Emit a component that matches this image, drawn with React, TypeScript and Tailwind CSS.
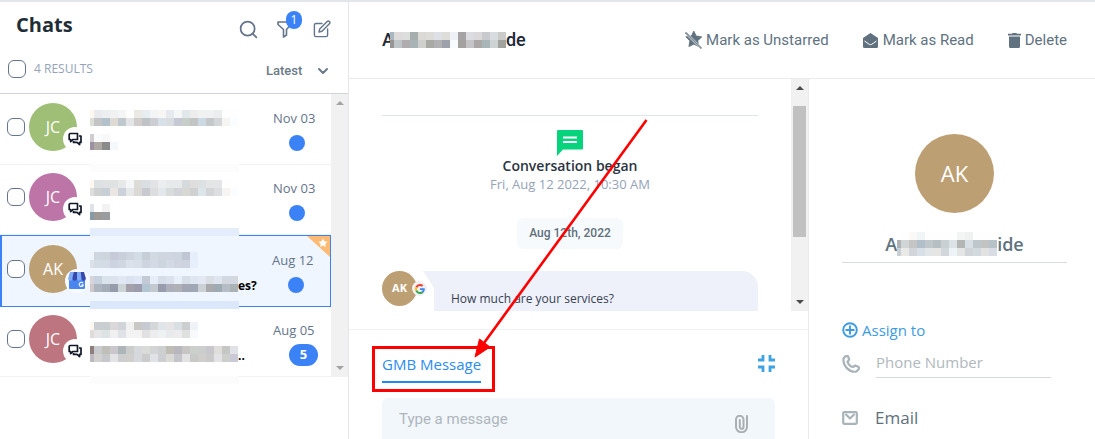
import React from "react";
import { LuSearch, LuChevronDown } from "react-icons/lu";

const ui = "font-['Open_Sans',sans-serif]";
const rb = "font-['Roboto',sans-serif]";

/* Redacted text: rows of 8px tiles, "." leaves a tile empty. */
function Redacted({ rows, first = 8, tile = 8, label }: { rows: string[]; first?: number; tile?: number; label: string }) {
  const grid = rows.map((r) => r.split(" "));
  const width = first + (grid[0].length - 1) * tile;
  return (
    <svg role="img" aria-label={label} width={width} height={rows.length * tile} shapeRendering="crispEdges" className="block shrink-0">
      {grid.map((row, y) =>
        row.map((c, x) =>
          c === "." ? null : (
            <rect key={x + "-" + y} x={x === 0 ? 0 : first + (x - 1) * tile} y={y * tile} width={x === 0 ? first : tile} height={tile} fill={"#" + c} />
          )
        )
      )}
    </svg>
  );
}

function ScrollArrow({ up, color }: { up?: boolean; color: string }) {
  return (
    <svg width="8" height="4" viewBox="0 0 8 4" fill={color}>
      <path d={up ? "M0 4L4 0L8 4Z" : "M0 0H8L4 4Z"} />
    </svg>
  );
}

function ChatsGlyph() {
  return (
    <svg width="14" height="14" viewBox="0 0 14 14" fill="none" stroke="#111827" strokeWidth="1.7" strokeLinejoin="round">
      <path d="M2 1.5H9.5V7.5H5L2.6 9.6V7.5H1.2V2.3Z" />
      <path d="M11 4H13V10.4H11.6V12.6L9 10.4H5.5V9" />
    </svg>
  );
}

function StoreGlyph() {
  return (
    <svg width="18" height="17" viewBox="0 0 18 17">
      <path d="M1 4H17V16a1 1 0 0 1-1 1H2a1 1 0 0 1-1-1Z" fill="#4a86f0" />
      <path d="M2 0H5.5L4.5 6.5a2.2 2.2 0 0 1-4.4 0Z" fill="#7faaf5" />
      <path d="M5.5 0H9V6.5a2.2 2.2 0 0 1-4.5 0Z" fill="#3949ab" />
      <path d="M9 0H12.5L13.5 6.5a2.2 2.2 0 0 1-4.5 0Z" fill="#7faaf5" />
      <path d="M12.5 0H16L17.9 6.5a2.2 2.2 0 0 1-4.4 0Z" fill="#3949ab" />
      <path d="M15 11.2A2.1 2.1 0 1 0 15.3 13H13.2" stroke="#fff" strokeWidth="1.1" fill="none" />
    </svg>
  );
}

function Check({ label }: { label: string }) {
  return <input type="checkbox" aria-label={label} className="size-[18px] shrink-0 appearance-none rounded-md border border-[#64748b] bg-white checked:bg-[#3b82f6]" />;
}

type Chat = {
  initials: string;
  color: string;
  date: string;
  name: string[];
  text: string[];
  band: string;
  tail?: string;
  count?: number;
  active?: boolean;
};

const chats: Chat[] = [
  {
    initials: "JC", color: "bg-[#9fbf77]", date: "Nov 03", band: "-bottom-2 bg-[#fcfcfc]",
    name: [
      "fdf8f0 e9eaee edeef0 f0f1f1 f5f5f5 fefefe ebe9e3 e6eef1 f3f4f5 f8f6f5 e6eaee f5f6f8 e2e7ea ededee f0f1f1 f0f1f3 ecedee fefefe fefefe",
      "deded8 c3c4c6 b3c1ca dedad5 bfc8cd e4e5e6 d0cdcc bfc2c7 cdced3 d8e0e8 dadde0 c5c9d3 c7cdc9 c3c5c4 cdd9e2 c4c8cb d4d6d9 f7f5f4 fafcfe",
    ],
    text: ["cfcccf fafbfd f8f8f8 .", "9d90a2 ada8a1 8a8a8a f4f8fd"],
  },
  {
    initials: "JC", color: "bg-[#bd74a7]", date: "Nov 03", band: "-bottom-0.5 bg-[#e3edfc]",
    name: [
      "fdf8ef dee1e3 dfe1e3 dfe2e2 e7e8ea f4f6f8 dedcd9 d9dfe3 e1e3e6 ebedef e6eaeb e8e9eb d6dadc dfdedd dce2e3 e4e5e6 e3e5e7 fefefe fefefe",
      "dedfda cfd0d2 c7d0d6 ebe6e2 cbd2d9 e7e8ea dad9d6 c9cacf dcdddf e3e8ec d9dcdd d3d4d9 d7d8d4 cfd1d3 dce5e9 d3d5d8 dddee0 f7f5f3 fafcfe",
    ],
    text: ["dfe3e8 ffffff f2f2f3 .", "889aa4 9e9995 989da0 ."],
  },
  {
    initials: "AK", color: "bg-[#bd9f74]", date: "Aug 12", active: true, tail: "es?", band: "-bottom-[3px] bg-[#dbe8fc]",
    name: [
      "eef3fc cfd6df cdd5dd c7cbd9 c9d0db ced5de d2dce7 c8ced8 d1d9e1 cfd6e0 cfd6e1 cdd5de c0c6d3 e7eefb",
      "dde0e7 d3dce5 d5dbe5 cdd3e0 d0d7e1 dbe1eb d9dfe9 cfd5e0 d3dae5 cdd6df d3dae5 cfd4e0 cdd4e0 e7effc",
    ],
    text: [
      "d9d4d8 c7d2de dae2ec dce3ee e1e8f3 dae3ef dfe7f7 c3cad5 e7eefa d7dee9 dbe1ed e7effb d9dfe9 dfe6f1 e3e8f2 dadfe6 dfe5ef d3d7e0 d3d7e0",
      "d0c8cb adb5c0 a5adb9 979cac cdd4d6 a5a1ab 9d9cac b2c5d3 c4c9cf 989dae adb0bb b1b2b7 a3a6b3 a0a7b5 ccd1d6 a9aaab 9eabb2 b7bdc4 acb3b6",
    ],
  },
  {
    initials: "JC", color: "bg-[#bd7580]", date: "Aug 05", tail: "..", count: 5, band: "-bottom-2 bg-[#fcfcfc]",
    name: [
      "fdf8ef cacdd1 c9cfd1 dad8d8 d1d5da f1f1f1 c9c8c6 c5cad3 d5d6d8 dfe5e8 e6e4e4 d9e0e3 cdcecf eff3f7",
      "dfdcdb e6e6e8 dde3e5 f0f0f0 dfe3e7 f3f3f3 f3f3f3 e0e1e0 ecedec eff2f2 e8eaeb ececee dfe1df f8f9fa",
    ],
    text: [
      "8d807c c8cacd c0beb8 c9c7cc acb5b7 cbcdcd d5d9dc dadbd9 d2d4d5 cecfcf bfbcb5 b9b7be c8c6c4 cbd0cd cccdcd c7c7cc dfdeda c5c7c5 e0e2e7",
      "bcbac0 d2d1cf c6c8cb e3e3e6 cdced0 d0cfcc d7d8de cccccd e0e2e7 ccced1 dbdad7 c4c5ca e2e1e3 c9cac8 cfcecc c9cac9 e3e2e7 cccfca c9cad6",
    ],
  },
];

function ChatRow({ chat }: { chat: Chat }) {
  return (
    <li className={chat.active ? "relative flex h-[72px] items-center gap-1 border border-l-2 border-[#3b82f6] bg-[#eff6ff] pr-4 pb-[5px] pl-[5px]" : "relative flex h-[70px] items-center gap-1 border-b border-[#f1f2f4] pr-4 pb-[5px] pl-[7px]"}>
      <Check label={"Select chat " + chat.initials} />
      <div className="relative shrink-0">
        <div className={"flex size-12 items-center justify-center rounded-full text-base text-white " + chat.color}>{chat.initials}</div>
        <div className={chat.active ? "absolute -right-3 bottom-0 flex size-6 items-center justify-center rounded-full bg-[#f7faff]" : "absolute -right-2.5 bottom-0 flex size-6 items-center justify-center rounded-full bg-white"}>
          {chat.active ? <StoreGlyph /> : <ChatsGlyph />}
        </div>
      </div>
      <div className="flex min-w-0 flex-1 flex-col gap-2 pt-1.5 pl-[9px]">
        <Redacted label="Contact name" rows={chat.name} first={4} />
        <div className="flex items-end">
          <Redacted label="Message preview" rows={chat.text} first={4} />
          {chat.tail && <span className="h-4 text-xs leading-5 font-bold text-black">{chat.tail}</span>}
        </div>
      </div>
      <div className="flex w-[42px] shrink-0 flex-col gap-1 pt-2">
        <span className="text-[13px] leading-5 whitespace-nowrap text-[#64748b]">{chat.date}</span>
        {chat.count ? (
          <span className="ml-4 flex h-[22px] w-[29px] items-center justify-center rounded-full bg-[#3b82f6] text-[13px] font-bold text-white">{chat.count}</span>
        ) : (
          <span className="my-[3px] ml-4 size-4 rounded-full bg-[#3b82f6]" />
        )}
      </div>
      {chat.active && (
        <svg className="absolute top-0 right-0" width="23" height="21" viewBox="0 0 23 21">
          <path d="M0 0H23V21Z" fill="#fdba74" />
          <path d="M16 2.5l1.4 2.8 3.1.4-2.2 2.2.5 3-2.8-1.4-2.8 1.4.5-3-2.2-2.2 3.1-.4Z" fill="#fff" />
        </svg>
      )}
      <span className={(chat.active ? "absolute left-[88px] z-10 h-2 w-[149px] " : "absolute left-[90px] z-10 h-2 w-[149px] ") + chat.band} />
    </li>
  );
}

function Sidebar() {
  return (
    <aside className="flex w-[349px] shrink-0 flex-col border-r border-[#e5e7eb]">
      <div className="border-b border-[#d1d5db] pr-[17px] pl-2">
        <div className="flex h-[50px] items-center justify-between pl-2">
          <h1 className="pb-1 text-xl leading-7 font-bold text-[#1f2d37]">Chats</h1>
          <div className="flex items-center gap-[18px] pt-1 text-[#64748b]">
            <button aria-label="Search"><LuSearch size={21} strokeWidth={2} /></button>
            <button aria-label="Filters" className="relative">
              <svg width="18" height="18" viewBox="0 0 18 18" fill="none" stroke="currentColor" strokeWidth="1.6" strokeLinejoin="round">
                <path d="M1 2H14V4.5L9.5 9.5V15L6.5 17V9.5L1 4.5Z" />
              </svg>
              <span className="absolute -top-[9px] left-[9px] flex h-[18px] w-4 items-center justify-center rounded-full bg-[#3b82f6] text-xs text-white">1</span>
            </button>
            <button aria-label="New chat">
              <svg width="18" height="18" viewBox="0 0 18 18" fill="none" stroke="currentColor" strokeWidth="1.4" strokeLinejoin="round" strokeLinecap="round">
                <path d="M9 3.5H3A1.6 1.6 0 0 0 1.4 5V15A1.6 1.6 0 0 0 3 16.6H13A1.6 1.6 0 0 0 14.6 15V9" />
                <path d="M6 12L6.7 9L14.2 1.6A1.4 1.4 0 0 1 16.4 3.8L9 11.3Z" />
              </svg>
            </button>
          </div>
        </div>
        <div className="flex h-[41px] items-center pb-2">
          <Check label="Select all chats" />
          <span className="ml-2 text-xs text-[#94a3b8]">4 RESULTS</span>
          <div className="ml-auto flex items-center gap-3 pt-1 text-[#6b7a88]">
            <select aria-label="Sort order" className={"appearance-none bg-transparent text-[13px] font-medium " + rb}>
              <option>Latest</option>
            </select>
            <LuChevronDown size={16} strokeWidth={3} />
          </div>
        </div>
      </div>
      <div className="flex">
        <ul className="min-w-0 flex-1 pt-px">
          {chats.map((c, i) => <ChatRow key={i} chat={c} />)}
        </ul>
        <div className="flex w-[17px] flex-col items-center justify-between bg-[#f1f1f1] py-[7px]">
          <ScrollArrow up color="#a3a3a3" />
          <ScrollArrow color="#a3a3a3" />
        </div>
      </div>
    </aside>
  );
}

function Header() {
  return (
    <header className={"flex h-[77px] items-center justify-between border-b border-[#e8eaef] pr-7 pl-[33px] " + rb}>
      <h2 className="flex items-center text-lg font-medium text-[#1f2937]">
        <span className="-mr-1">A</span>
        <Redacted
          label="Contact name"
          first={4}
          rows={[
            "a9b8c0 dddcdb dcdddd a5adad dad9d6 dddcd9 dde0e5 dfddd9 eef1f5 a5a3a3 dcdde1 dad8da c9cace d7dce0 cbccc9",
            "989695 bfc6ca b1adae a8b3b7 cfcfce a8a8a5 b1b0b3 9da1a9 f8fcff a3a2a1 c5c5c7 aca7a7 a9b5b8 ced3d3 a1a29e",
          ]}
        />
        <span>de</span>
      </h2>
      <div className="flex gap-[34px] text-[15px] text-[#60727f]">
        <button className="flex items-center gap-1">
          <svg width="17" height="18" viewBox="0 0 17 18">
            <path d="M8.800 0l2.400 5 5.600.8-4 4 .9 5.800-4.900-2.400-4.900 2.400.9-5.800-4-4 5.600-.8Z" fill="currentColor" stroke="currentColor" strokeWidth=".8" strokeLinejoin="round" />
            <path d="M.5 1.500L16.500 17.500" stroke="#fff" strokeWidth="2.400" />
            <path d="M.5 1.500L16.500 17.500" stroke="#8694a0" strokeWidth="1.800" />
          </svg>
          Mark as Unstarred
        </button>
        <button className="flex items-center gap-[5px]">
          <svg width="15" height="15" viewBox="0 0 15 15">
            <path d="M7.500 0L15 5V13.500A1.500 1.500 0 0 1 13.500 15H1.500A1.500 1.500 0 0 1 0 13.500V5Z" fill="currentColor" />
            <path d="M1.500 8L6.200 11.300Q7.500 12 8.800 11.300L13.500 8" fill="none" stroke="#fff" strokeWidth="1" />
          </svg>
          Mark as Read
        </button>
        <button className="flex items-center gap-1">
          <svg width="13" height="15" viewBox="0 0 13 15" fill="currentColor"><path d="M0 .8H4L4.600 0H8.400L9 .8H13V2.500H0ZM1 3.400H12V13.500A1.500 1.500 0 0 1 10.500 15H2.500A1.500 1.500 0 0 1 1 13.500Z" /></svg>
          Delete
        </button>
      </div>
    </header>
  );
}

function Conversation() {
  return (
    <main className="flex min-w-0 flex-1 flex-col border-r border-[#e8eaef]">
      <div className="flex h-[232px]">
        <div className="flex min-w-0 flex-1 flex-col items-center overflow-hidden px-[33px]">
          <div className="mt-9 w-full border-t border-[#e2e5e8]" />
          <svg className="mt-[14px] shrink-0" width="26" height="26" viewBox="0 0 26 26">
            <path d="M1 0H25A1 1 0 0 1 26 1V18.500A1 1 0 0 1 25 19.500H6L0 26V1A1 1 0 0 1 1 0Z" fill="#05d47c" />
            <path d="M6 6.500H20V8.500H6ZM6 11H20V13H6Z" fill="#fff" />
          </svg>
          <p className="text-[14px] leading-5 font-semibold text-[#2a3440]">Conversation began</p>
          <p className="text-[13px] leading-4 text-[#94a3b8]">Fri, Aug 12 2022, 10:30 AM</p>
          <p className={"mt-[26px] rounded-md bg-[#f6fafd] px-3 py-2 text-xs leading-[15px] font-medium text-[#5f6f7b] " + rb}>Aug 12th, 2022</p>
          <div className="mt-[22px] flex w-full items-start">
            <div className="relative flex size-[35px] shrink-0 items-center justify-center rounded-full bg-[#bd9f74] text-[11px] font-bold text-white">
              AK
              <span className="absolute top-[10px] -right-[10px] flex size-[15px] items-center justify-center rounded-full bg-[#f1f1f3]">
                <svg width="10" height="10" viewBox="0 0 48 48">
                  <path fill="#ea4335" d="M24 9.500c3.500 0 6.700 1.200 9.200 3.600l6.900-6.900C35.900 2.400 30.500 0 24 0 14.600 0 6.500 5.400 2.600 13.200l8 6.200C12.400 13.700 17.700 9.500 24 9.500z" />
                  <path fill="#4285f4" d="M47 24.500c0-1.600-.2-3.100-.4-4.500H24v9h12.900c-.6 3-2.300 5.500-4.800 7.200l7.700 6C44.400 38 47 31.800 47 24.500z" />
                  <path fill="#fbbc05" d="M10.500 28.600c-.5-1.500-.8-3-.8-4.600s.3-3.100.8-4.600l-8-6.200C.9 16.500 0 20.100 0 24s.9 7.500 2.600 10.800z" />
                  <path fill="#34a853" d="M24 48c6.500 0 11.900-2.100 15.900-5.800l-7.700-6c-2.200 1.500-4.900 2.300-8.200 2.300-6.300 0-11.600-4.200-13.500-9.900l-8 6.200C6.500 42.600 14.600 48 24 48z" />
                </svg>
              </span>
            </div>
            <svg className="ml-1.5 shrink-0" width="11" height="40" viewBox="0 0 11 40"><path d="M0 0H11V40V17Z" fill="#eef1fa" /></svg>
            <div className="h-[60px] flex-1 rounded-tr-2xl bg-[#eef1fa] px-[17px] pt-[18px] text-xs leading-5 text-[#374151]">How much are your services?</div>
          </div>
        </div>
        <div className="flex w-[17px] flex-col items-center justify-between bg-[#f1f1f1] py-[7px]">
          <ScrollArrow up color="#4b4b4b" />
          <div className="mt-4 mb-auto h-[131px] w-[13px] bg-[#c1c1c1]" />
          <ScrollArrow color="#4b4b4b" />
        </div>
      </div>
      <div className="mt-[18px] border-t border-[#f0f1f3] px-[33px]">
        <div className="flex items-start justify-between pt-[22px]">
          <div className="relative">
            <button className="block border-b-2 border-[#1e88f5] pb-[5px] text-[15px] leading-6 text-[#2b8cf0]">GMB Message</button>
            <div className="pointer-events-none absolute -top-[6px] -right-[14px] -bottom-[9px] -left-[10px] border-3 border-[#ff0000]" />
            <svg className="pointer-events-none absolute -top-[234px] left-[90px]" width="180" height="242" viewBox="0 0 180 242">
              <path d="M174.500 2L12 225" stroke="#ff0000" strokeWidth="2.600" />
              <path d="M3 239L7.500 221L18 229Z" fill="#ff0000" stroke="#ff0000" />
            </svg>
          </div>
          <button aria-label="Collapse composer" className="mt-[3px]">
            <svg width="17" height="17" viewBox="0 0 17 17" fill="none" stroke="#3ea3e3" strokeWidth="2.800">
              <path d="M0 5H5V0M12 0V5H17M17 12H12V17M5 17V12H0" />
            </svg>
          </button>
        </div>
        <div className="mt-[15px] flex h-20 items-start justify-between rounded-md bg-[#f2f7fb] px-[17px] pt-[9px]">
          <input aria-label="Message" placeholder="Type a message" className={"min-w-0 flex-1 bg-transparent text-[15px] leading-6 outline-none placeholder:text-[#aeb6bb] " + rb} />
          <button aria-label="Attach file" className="mt-2 mr-[10px]">
            <svg width="13" height="18" viewBox="0 0 13 18" fill="none" stroke="#a9afb3" strokeWidth="2" strokeLinecap="round">
              <path d="M12 1V12A5.500 5.200 0 0 1 1 12V4.500A3.700 3.700 0 0 1 8.500 4.500V12A1.800 1.800 0 0 1 4.800 12V5" />
            </svg>
          </button>
        </div>
      </div>
    </main>
  );
}

function Profile() {
  return (
    <section className="flex w-[286px] shrink-0 flex-col pr-7 pl-[33px]">
      <div className="mt-[55px] flex size-[79px] items-center justify-center self-center rounded-full bg-[#bd9f74] text-[22px] text-white">AK</div>
      <h3 className="mt-[14px] flex h-9 items-center justify-center border-b border-[#d9dce2] pb-0.5 text-lg font-semibold text-[#60727f]">
        A
        <Redacted
          label="Contact name"
          first={4}
          rows={[
            "ffffff fefefe fbf9f8 f2f5f7 fefefe fefefe fefefe fefefe f3f4f4 f0f1f1 fefefe fefefe fefefe",
            "aeb2b4 d0d6d6 c5c5c5 b0bfca c0c7cb b5bfc4 c8d0d2 dde2e6 b4b6b6 d9dfe6 bdc7cc c2c4c4 b6c1c8",
            "c8d0d5 e9eae8 d2d6db d8dfe7 e2e6e6 e5e6e4 d2d7db eef3f7 e4e6e5 d0d5da d3dadf e2e3e1 d7dce5",
          ]}
        />
        ide
      </h3>
      <button className="mt-[55px] flex items-center gap-1 self-start text-[15px] leading-6 text-[#3d9be0]">
        <svg width="16" height="16" viewBox="0 0 16 16" fill="none" stroke="currentColor" strokeWidth="1.900"><circle cx="8" cy="8" r="6.800" /><path d="M8 3.500V12.500M3.500 8H12.500" /></svg>
        Assign to
      </button>
      <div className="mt-1 flex items-center gap-4 pr-4">
        <svg className="mt-1 shrink-0" width="18" height="18" viewBox="0 0 18 18" fill="none" stroke="#a9b3ba" strokeWidth="2.200" strokeLinejoin="round">
          <path d="M1.500 3.500L3.500 1.200H6L7.200 4.500L5.500 6.800C6.500 9.500 8.500 11.500 11 12L13.200 10.500L16.800 12V14L14.500 16.500C7.500 18 .8 11 1.500 3.500Z" />
        </svg>
        <input aria-label="Phone Number" type="tel" placeholder="Phone Number" className="h-8 min-w-0 flex-1 border-b border-[#d5d8df] bg-transparent text-[15px] leading-6 outline-none placeholder:text-[#b0b8bd]" />
      </div>
      <div className="mt-7 flex items-center gap-[17px] text-[17px] leading-6 text-[#60707c]">
        <svg width="16" height="14" viewBox="0 0 16 14" fill="none" stroke="#a9b3ba" strokeWidth="2.200" strokeLinejoin="round"><rect x="1.200" y="1.200" width="13.600" height="11.600" rx="1" /><path d="M3.500 3L8 7.500L12.500 3" /></svg>
        Email
      </div>
    </section>
  );
}

export default function App() {
  return (
    <div className={"flex h-screen overflow-hidden border-t-2 border-[#e2e6ea] bg-white " + ui}>
      <Sidebar />
      <div className="flex min-w-0 flex-1 flex-col">
        <Header />
        <div className="flex min-h-0 flex-1">
          <Conversation />
          <Profile />
        </div>
      </div>
    </div>
  );
}
